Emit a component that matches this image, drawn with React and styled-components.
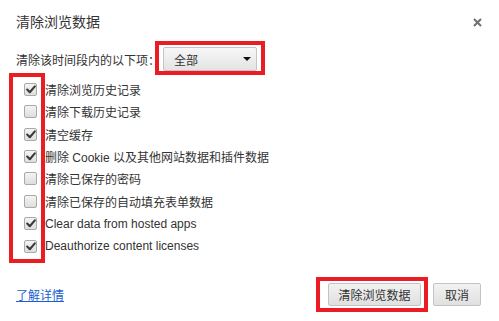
import React from "react";
import styled, { createGlobalStyle } from "styled-components";

const Global = createGlobalStyle`
  html, body { margin: 0; padding: 0; background: #fff; }
  body {
    font-family: "Liberation Sans", "Noto Sans CJK SC", sans-serif;
    color: #333;
  }
`;

const Dialog = styled.div`
  position: relative;
  width: 499px;
  height: 321px;
  box-sizing: border-box;
  background: #fff;
  overflow: hidden;
`;

const Header = styled.div`
  display: flex;
  align-items: center;
  justify-content: space-between;
  height: 42px;
  padding: 0 17px 0 16px;
`;

const Title = styled.h1`
  margin: 0;
  font-size: 14px;
  font-weight: normal;
  color: #333;
`;

const Close = styled.button`
  border: 0;
  background: none;
  padding: 0;
  width: 10px;
  height: 10px;
  display: flex;
  align-items: center;
  justify-content: center;
  cursor: pointer;
  margin-top: 2px;
`;

const RangeRow = styled.div`
  display: flex;
  align-items: center;
  margin: 5px 0 0 16px;
  height: 24px;
`;

const RangeLabel = styled.span`
  width: 147px;
  font-size: 12px;
  white-space: nowrap;
`;

const Select = styled.div`
  display: flex;
  align-items: center;
  justify-content: space-between;
  box-sizing: border-box;
  width: 94px;
  height: 24px;
  padding: 0 5px 0 10px;
  border: 1px solid #c4c4c4;
  border-radius: 2px;
  background: linear-gradient(#f7f7f7, #e3e3e3);
  font-size: 12px;
  color: #333;
`;

const Arrow = styled.span`
  width: 0;
  height: 0;
  border-left: 4px solid transparent;
  border-right: 4px solid transparent;
  border-top: 4px solid #111;
`;

const List = styled.ul`
  list-style: none;
  margin: 7px 0 0 0;
  padding: 0 0 0 24px;
`;

const Item = styled.li`
  display: flex;
  align-items: center;
  height: 22.43px;
  gap: 8px;
  font-size: 12px;
  color: #333;
  white-space: nowrap;
`;

const Box = styled.span`
  box-sizing: border-box;
  width: 13px;
  height: 13px;
  border: 1px solid #a9a9a9;
  border-radius: 2px;
  background: linear-gradient(#f4f4f4, #dedede);
  display: flex;
  align-items: center;
  justify-content: center;
`;

const Footer = styled.div`
  display: flex;
  align-items: center;
  justify-content: space-between;
  margin-top: 25.8px;
  height: 23px;
  padding: 0 18px 0 16px;
`;

const Link = styled.a`
  font-size: 12px;
  color: #1a5fcf;
  text-decoration: underline;
  cursor: pointer;
`;

const Buttons = styled.div`
  display: flex;
  gap: 12px;
`;

const Button = styled.button`
  box-sizing: border-box;
  height: 23px;
  width: ${(p) => p.$w}px;
  padding: 0;
  border: 1px solid #c3c3c3;
  border-radius: 2px;
  background: linear-gradient(#f2f2f2, #e0e0e0);
  font-family: "Liberation Sans", "Noto Sans CJK SC", sans-serif;
  font-size: 12px;
  color: #333;
`;

const Mark = styled.div`
  position: absolute;
  box-sizing: border-box;
  border: 4px solid #ec1c24;
  pointer-events: none;
`;

const Check = () => (
  <svg width="10" height="9" viewBox="0 0 10 9">
    <path d="M1.2 4.6 L3.8 7.2 L8.8 1.4" fill="none" stroke="#3a3a3a" strokeWidth="2.1" strokeLinecap="round" strokeLinejoin="round" />
  </svg>
);

const items = [
  ["清除浏览历史记录", true],
  ["清除下载历史记录", false],
  ["清空缓存", true],
  ["删除 Cookie 以及其他网站数据和插件数据", true],
  ["清除已保存的密码", false],
  ["清除已保存的自动填充表单数据", false],
  ["Clear data from hosted apps", true],
  ["Deauthorize content licenses", true],
];

export default function App() {
  return (
    <>
      <Global />
      <Dialog>
        <Header>
          <Title>清除浏览数据</Title>
          <Close aria-label="close">
            <svg width="9" height="9" viewBox="0 0 9 9">
              <path d="M1 1 L8 8 M8 1 L1 8" stroke="#6f6f6f" strokeWidth="2" />
            </svg>
          </Close>
        </Header>
        <RangeRow>
          <RangeLabel>清除该时间段内的以下项：</RangeLabel>
          <Select>
            <span>全部</span>
            <Arrow />
          </Select>
        </RangeRow>
        <List>
          {items.map(([t, c]) => (
            <Item key={t}>
              <Box>{c && <Check />}</Box>
              <span>{t}</span>
            </Item>
          ))}
        </List>
        <Footer>
          <Link>了解详情</Link>
          <Buttons>
            <Button $w={93}>清除浏览数据</Button>
            <Button $w={48}>取消</Button>
          </Buttons>
        </Footer>
        <Mark style={{ left: 155, top: 41, width: 110, height: 34 }} />
        <Mark style={{ left: 9, top: 73, width: 36, height: 190 }} />
        <Mark style={{ left: 316, top: 277, width: 112, height: 35 }} />
      </Dialog>
    </>
  );
}
